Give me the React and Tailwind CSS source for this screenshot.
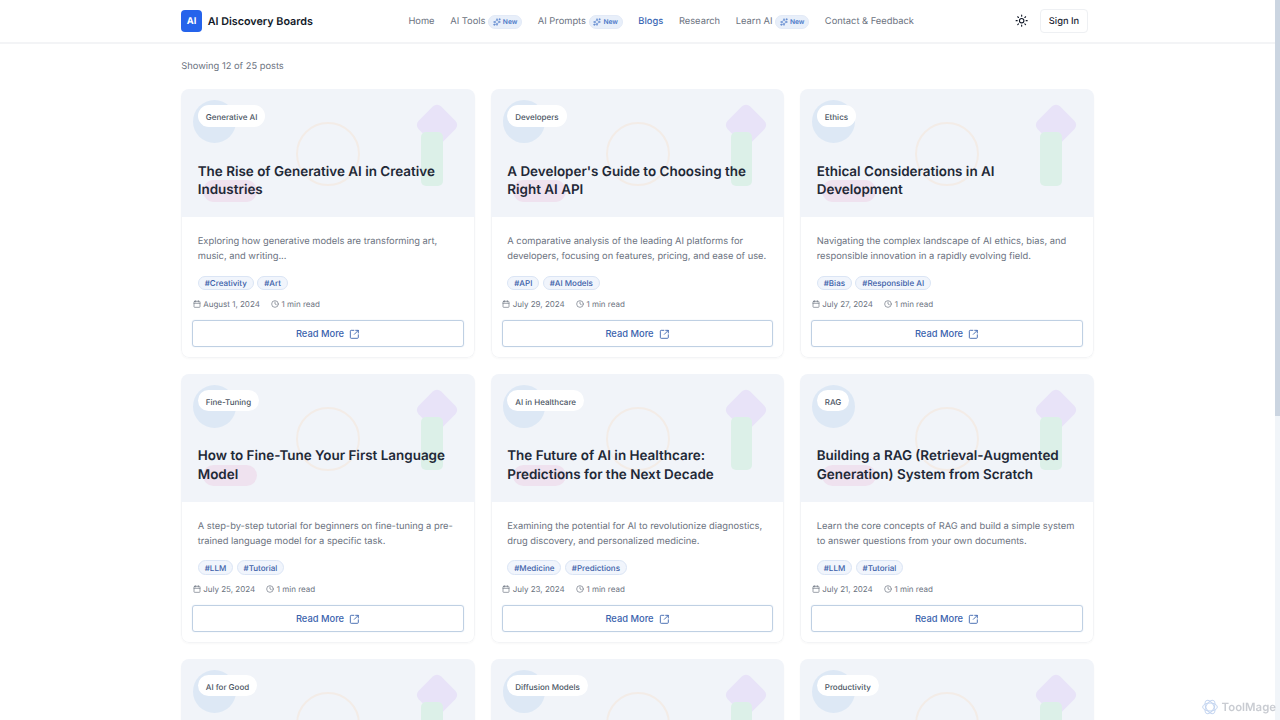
import React from "react";
import { Calendar, Clock, SquareArrowOutUpRight, Sun, Sparkles } from "lucide-react";

const posts = [
  ["Generative AI", "The Rise of Generative AI in Creative Industries", "Exploring how generative models are transforming art, music, and writing...", ["#Creativity", "#Art"], "August 1, 2024"],
  ["Developers", "A Developer's Guide to Choosing the Right AI API", "A comparative analysis of the leading AI platforms for developers, focusing on features, pricing, and ease of use.", ["#API", "#AI Models"], "July 29, 2024"],
  ["Ethics", "Ethical Considerations in AI Development", "Navigating the complex landscape of AI ethics, bias, and responsible innovation in a rapidly evolving field.", ["#Bias", "#Responsible AI"], "July 27, 2024"],
  ["Fine-Tuning", "How to Fine-Tune Your First Language Model", "A step-by-step tutorial for beginners on fine-tuning a pre-trained language model for a specific task.", ["#LLM", "#Tutorial"], "July 25, 2024"],
  ["AI in Healthcare", "The Future of AI in Healthcare: Predictions for the Next Decade", "Examining the potential for AI to revolutionize diagnostics, drug discovery, and personalized medicine.", ["#Medicine", "#Predictions"], "July 23, 2024"],
  ["RAG", "Building a RAG (Retrieval-Augmented Generation) System from Scratch", "Learn the core concepts of RAG and build a simple system to answer questions from your own documents.", ["#LLM", "#Tutorial"], "July 21, 2024"],
  ["AI for Good", "How AI Is Being Used for Social Good", "A look at the projects applying machine learning to climate, health, and education challenges.", ["#Impact", "#Society"], "July 19, 2024"],
  ["Diffusion Models", "Understanding Diffusion Models From the Ground Up", "An accessible introduction to the ideas behind modern image generation models.", ["#Images", "#Models"], "July 17, 2024"],
  ["Productivity", "Ten Ways to Boost Productivity With AI Tools", "Practical tips for bringing AI assistants into your everyday work and routines.", ["#Tools", "#Workflow"], "July 15, 2024"],
  ["Prompting", "Prompt Engineering Basics Every User Should Know", "Simple techniques for writing clearer prompts and getting better answers from models.", ["#Prompts", "#Basics"], "July 13, 2024"],
  ["Open Source", "The Growing World of Open Source AI Models", "How openly released models are changing who can build with artificial intelligence.", ["#Open", "#Models"], "July 11, 2024"],
  ["Agents", "What Are AI Agents and How Do They Work?", "A plain guide to systems that plan, use tools, and complete tasks by themselves.", ["#Agents", "#Guide"], "July 9, 2024"],
];

function NewBadge() {
  return (
    <span className="flex h-[13.33px] w-[34px] items-center justify-center gap-[2px] rounded-full border border-[#e3eaf7] bg-[#e8effa] text-[6.67px] font-semibold text-[#4a78c8]">
      <Sparkles className="h-[8px] w-[8px]" strokeWidth={2} />
      New
    </span>
  );
}

function NavItem({ label, badge, active }) {
  return (
    <span className={`flex items-center gap-[2.67px] text-[9.33px] ${active ? "font-medium text-[#3b68b5]" : "font-normal text-[#6b7280]"}`}>
      {label}
      {badge && <NewBadge />}
    </span>
  );
}

function Card({ post }) {
  const [cat, title, desc, tags, date] = post;
  return (
    <article className="flex h-[268.8px] flex-col overflow-hidden rounded-[8px] bg-white shadow-[0_1px_2px_rgba(0,0,0,0.03)]">
      <div className="relative h-[128px] shrink-0 overflow-hidden bg-[#f1f4f9] px-[16.5px] pt-[16px]">
        <div className="absolute left-[12px] top-[11px] h-[42.67px] w-[42.67px] rounded-full bg-[#dde8f5]" />
        <div className="absolute left-[115px] top-[33px] h-[64px] w-[64px] rounded-full border-[2.67px] border-[#f3ece7]" />
        <div className="absolute left-[239.5px] top-[20px] h-[32px] w-[32px] rotate-45 rounded-[6px] bg-[#e8e3f8]" />
        <div className="absolute left-[240px] top-[43px] h-[53.33px] w-[21.33px] rounded-[5px] bg-[#dcf0e8]" />
        <div className="absolute left-[22px] top-[91px] h-[21.33px] w-[53.33px] rounded-full bg-[#efe2ef]" />
        <div className="relative flex h-full flex-col">
          <span className="flex h-[21.33px] w-fit items-center rounded-full bg-white px-[8px] pt-[2px] text-[8px] font-medium text-[#4b5563]">{cat}</span>
          <h2 className="mt-[36px] text-[13.45px] font-semibold leading-[18.67px] text-[#1f2937]">{title}</h2>
        </div>
      </div>
      <div className="flex flex-1 flex-col rounded-b-[8px] border-x border-b border-[#f3f4f6] px-[10px] pb-[10px] pt-[17px]">
        <p className="h-[30.33px] px-[5.5px] text-[9.33px] leading-[15.17px] text-[#6b7280]">{desc}</p>
        <div className="mt-[11px] flex gap-[3.33px] px-[5.5px]">
          {tags.map((t) => (
            <span key={t} className="flex h-[14.67px] items-center rounded-full border border-[#dbe5f5] bg-[#f1f5fc] px-[6px] text-[8px] font-medium text-[#3b5ea8]">{t}</span>
          ))}
        </div>
        <div className="mt-[7px] flex h-[14px] items-center gap-[11px] px-[0.3px] text-[8px] text-[#6b7280]">
          <span className="flex items-center gap-[2.67px]"><Calendar className="h-[8px] w-[8px]" />{date}</span>
          <span className="flex items-center gap-[2.67px]"><Clock className="h-[8px] w-[8px]" />1 min read</span>
        </div>
        <button className="mt-auto flex h-[27px] w-full items-center justify-center gap-[5.33px] rounded-[3px] border border-[#bfd0e3] pt-[1px] text-[9.33px] font-medium text-[#3a62ad] shadow-[0_0_1px_#bfd0e3]">
          Read More
          <SquareArrowOutUpRight className="h-[10.67px] w-[10.67px]" />
        </button>
      </div>
    </article>
  );
}

function ToolMage() {
  return (
    <div className="pointer-events-none fixed bottom-[4px] right-[4px] flex items-center gap-[4px] text-[11.4px] font-semibold text-[#c9ccd2]">
      <svg viewBox="0 0 24 24" className="h-[16px] w-[16px]" fill="none" stroke="#c4d5f0" strokeWidth="1.5">
        <ellipse cx="12" cy="12" rx="11" ry="6" />
        <ellipse cx="12" cy="12" rx="11" ry="6" transform="rotate(60 12 12)" />
        <ellipse cx="12" cy="12" rx="11" ry="6" transform="rotate(120 12 12)" />
      </svg>
      ToolMage
    </div>
  );
}

export default function App() {
  return (
    <div className="min-h-screen bg-white pr-[5px] font-['Inter',sans-serif] [text-rendering:geometricPrecision]">
      <header className="flex h-[44px] items-center border-b-2 border-[#f3f4f6] pl-[181px] pr-[187px]">
        <div className="flex items-center gap-[5.33px]">
          <span className="flex h-[21.33px] w-[21.33px] items-center justify-center rounded-[4px] bg-[#2563eb] pt-[1px] text-[9.33px] font-bold text-white">AI</span>
          <span className="pt-[2px] text-[10.77px] font-semibold text-[#111827]">AI Discovery Boards</span>
        </div>
        <nav className="ml-[95.5px] flex items-center gap-[15.67px] pt-[2px]">
          <NavItem label="Home" />
          <NavItem label="AI Tools" badge />
          <NavItem label="AI Prompts" badge />
          <NavItem label="Blogs" active />
          <NavItem label="Research" />
          <NavItem label="Learn AI" badge />
          <NavItem label="Contact & Feedback" />
        </nav>
        <div className="ml-auto flex items-center gap-[12px]">
          <Sun className="h-[13.33px] w-[13.33px] text-[#111827]" />
          <span className="flex h-[24px] w-[48px] items-center justify-center rounded-[4px] border border-[#eef0f3] pt-[1px] text-[9.33px] font-medium text-[#1f2937]">Sign In</span>
        </div>
      </header>
      <main className="mx-auto w-[912.5px] pb-[34px] pt-[16px]">
        <p className="text-[9.33px] leading-[14px] text-[#6b7280]">Showing 12 of 25 posts</p>
        <div className="mt-[15.3px] grid grid-cols-3 gap-[16px]">
          {posts.map((p) => <Card key={p[1]} post={p} />)}
        </div>
      </main>
      <div className="fixed right-0 top-0 h-screen w-[5px] bg-[#f1f5f9]">
        <div className="h-[416px] w-full bg-[#cbd5e1]" />
      </div>
      <ToolMage />
    </div>
  );
}
